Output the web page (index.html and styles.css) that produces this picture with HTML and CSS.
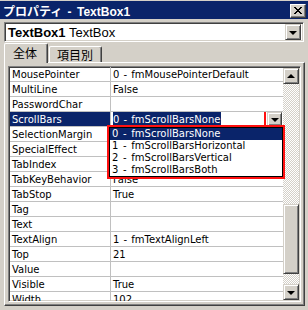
FILE: index.html
```html
<!DOCTYPE html>
<html lang="ja">
<head>
  <meta charset="UTF-8">
  <title>プロパティ - TextBox1</title>
  <link rel="stylesheet" href="styles.css">
</head>
<body>
  <!-- Title bar -->
  <div class="titlebar">
    <span>プロパティ - TextBox1</span>
    <button class="close">
      <svg width="8" height="7" viewBox="0 0 8 7"><path d="M0 0L7 7M1 0L8 7M7 0L0 7M8 0L1 7" stroke="#000" stroke-width="1" shape-rendering="crispEdges"/></svg>
    </button>
  </div>

  <!-- Object selector -->
  <div class="objbox">
    <span class="objname"><b>TextBox1</b> TextBox</span>
    <span class="dropbtn"><i class="arrow-down"></i></span>
  </div>

  <!-- Tabs -->
  <div class="tabs">
    <div class="tab active">全体</div>
    <div class="tab">項目別</div>
  </div>

  <div class="panel">
    <div class="grid">
      <div class="rows">
        <div class="row"><div class="name">MousePointer</div><div class="value">0 - fmMousePointerDefault</div></div>
        <div class="row"><div class="name">MultiLine</div><div class="value">False</div></div>
        <div class="row"><div class="name">PasswordChar</div><div class="value"></div></div>
        <div class="row current">
          <div class="name">ScrollBars</div>
          <div class="value">
            <span class="sel">0 - fmScrollBarsNone</span>
            <span class="cellbtn"><i class="arrow-down"></i></span>
          </div>
          <!-- open dropdown list -->
          <ul class="droplist">
            <li class="hl">0 - fmScrollBarsNone</li>
            <li>1 - fmScrollBarsHorizontal</li>
            <li>2 - fmScrollBarsVertical</li>
            <li>3 - fmScrollBarsBoth</li>
          </ul>
        </div>
        <!-- values of the next rows are hidden under the open list -->
        <div class="row"><div class="name">SelectionMargin</div><div class="value"></div></div>
        <div class="row"><div class="name">SpecialEffect</div><div class="value"></div></div>
        <div class="row"><div class="name">TabIndex</div><div class="value"></div></div>
        <div class="row"><div class="name">TabKeyBehavior</div><div class="value">False</div></div>
        <div class="row"><div class="name">TabStop</div><div class="value">True</div></div>
        <div class="row"><div class="name">Tag</div><div class="value"></div></div>
        <div class="row"><div class="name">Text</div><div class="value"></div></div>
        <div class="row"><div class="name">TextAlign</div><div class="value">1 - fmTextAlignLeft</div></div>
        <div class="row"><div class="name">Top</div><div class="value">21</div></div>
        <div class="row"><div class="name">Value</div><div class="value"></div></div>
        <div class="row"><div class="name">Visible</div><div class="value">True</div></div>
        <div class="row"><div class="name">Width</div><div class="value">102</div></div>
      </div>

      <!-- Vertical scrollbar -->
      <div class="vscroll">
        <span class="sbtn"><i class="arrow-up"></i></span>
        <div class="track"><div class="thumb"></div></div>
        <span class="sbtn"><i class="arrow-down"></i></span>
      </div>
    </div>
  </div>
</body>
</html>
```

FILE: styles.css
```css
/* Classic Windows property window */
* {
  box-sizing: border-box;
}

body {
  margin: 0;
  width: 308px;
  height: 310px;
  overflow: hidden;
  background: #d4d0c8;
  font-family: "DejaVu Sans", "Noto Sans CJK JP", sans-serif;
  font-size: 10px;
  color: #000;
}

.titlebar {
  margin-top: 1px;
  height: 18px;
  background: #0a246a;
  color: #fff;
  font-family: "Liberation Sans", "Noto Sans CJK JP", sans-serif;
  font-weight: bold;
  font-size: 12px;
  word-spacing: 2px;
  display: flex;
  align-items: center;
  justify-content: space-between;
  padding: 0 2px 0 3px;
}

.close {
  width: 16px;
  height: 14px;
  padding: 0;
  margin-top: 1px;
  background: #d4d0c8;
  border: 1px solid;
  border-color: #fff #404040 #404040 #fff;
  box-shadow: inset -1px -1px #808080;
  display: flex;
  align-items: center;
  justify-content: center;
}

/* Object selector combo */
.objbox {
  margin: 3px 4px 0 4px;
  height: 20px;
  background: #fff;
  border: 1px solid;
  border-color: #808080 #fff #fff #808080;
  box-shadow: inset 1px 1px #404040, inset -1px -1px #d4d0c8;
  display: flex;
  align-items: center;
  justify-content: space-between;
  padding: 0 2px 0 3px;
  font-family: "Liberation Sans", sans-serif;
  font-size: 13px;
}

.objname b {
  font-weight: bold;
}

.dropbtn,
.cellbtn,
.sbtn {
  display: flex;
  align-items: center;
  justify-content: center;
  background: #d4d0c8;
  border: 1px solid;
  border-color: #d4d0c8 #404040 #404040 #d4d0c8;
  box-shadow: inset 1px 1px #fff, inset -1px -1px #808080;
}

.dropbtn {
  width: 16px;
  height: 16px;
}

.arrow-down,
.arrow-up {
  width: 0;
  height: 0;
  border-left: 4px solid transparent;
  border-right: 4px solid transparent;
}

.arrow-down {
  border-top: 4px solid #000;
  margin-top: 1px;
}

.arrow-up {
  border-bottom: 4px solid #000;
}

/* Tabs */
.tabs {
  display: flex;
  align-items: flex-end;
  margin-top: 1px;
  padding-left: 4px;
  height: 19px;
  font-family: "Noto Sans CJK JP", sans-serif;
  font-size: 12px;
}

.tab {
  height: 16px;
  padding: 0 8px 0 7px;
  border: 1px solid;
  border-bottom: none;
  border-color: #fff #404040 #fff #fff;
  box-shadow: inset -1px 0 #808080;
  border-radius: 2px 2px 0 0;
  line-height: 15px;
  margin-left: 1px;
}

.tab.active {
  height: 20px;
  width: 44px;
  margin-left: 0;
  margin-bottom: -1px;
  padding: 0 0 0 8px;
  background: #d4d0c8;
  position: relative;
  z-index: 1;
  line-height: 17px;
}

.panel {
  margin: 0 3px 0 4px;
  height: 244px;
  border: 1px solid;
  border-color: #fff #404040 #404040 #fff;
  box-shadow: inset -1px -1px #808080;
  padding: 3px 3px 2px 3px;
}

/* Property grid */
.grid {
  height: 236px;
  border: 1px solid;
  border-color: #808080 #fff #fff #808080;
  box-shadow: inset 1px 1px #404040, inset -1px -1px #d4d0c8;
  padding: 1px;
  display: flex;
  overflow: hidden;
  background: #fff;
}

.rows {
  flex: 1;
  margin-top: -1px;
}

.row {
  height: 15px;
  display: flex;
  border-bottom: 1px solid #c0c0c0;
  position: relative;
  line-height: 15px;
  white-space: nowrap;
  word-spacing: 1px;
}

.name {
  width: 101px;
  padding-left: 2px;
  border-right: 1px solid #c0c0c0;
}

.value {
  flex: 1;
  padding-left: 2px;
  display: flex;
  justify-content: space-between;
  overflow: hidden;
}

.row.current .name {
  background: #0a246a;
  color: #fff;
}

.sel {
  background: #0a246a;
  color: #fff;
  padding-right: 1px;
}

.cellbtn {
  width: 15px;
  height: 14px;
  margin-right: 1px;
  outline: 2px solid #ff1010;
  outline-offset: 1px;
}

.droplist {
  position: absolute;
  top: 15px;
  left: 99px;
  width: 174px;
  margin: 0;
  padding: 0;
  list-style: none;
  background: #fff;
  border: 1px solid #000;
  outline: 2px solid #ff1010;
  z-index: 2;
  word-spacing: 1.5px;
}

.droplist li {
  height: 12px;
  line-height: 12px;
  padding-left: 2px;
}

.droplist li.hl {
  background: #0a246a;
  color: #fff;
}

/* Scrollbar */
.vscroll {
  width: 16px;
  display: flex;
  flex-direction: column;
}

.sbtn {
  height: 16px;
}

.track {
  flex: 1;
  background: repeating-conic-gradient(#fff 0 25%, #d4d0c8 0 50%) 0 0 / 2px 2px;
}

.thumb {
  margin-top: 120px;
  height: 70px;
  background: #d4d0c8;
  border: 1px solid;
  border-color: #d4d0c8 #404040 #404040 #d4d0c8;
  box-shadow: inset 1px 1px #fff, inset -1px -1px #808080;
}
```
